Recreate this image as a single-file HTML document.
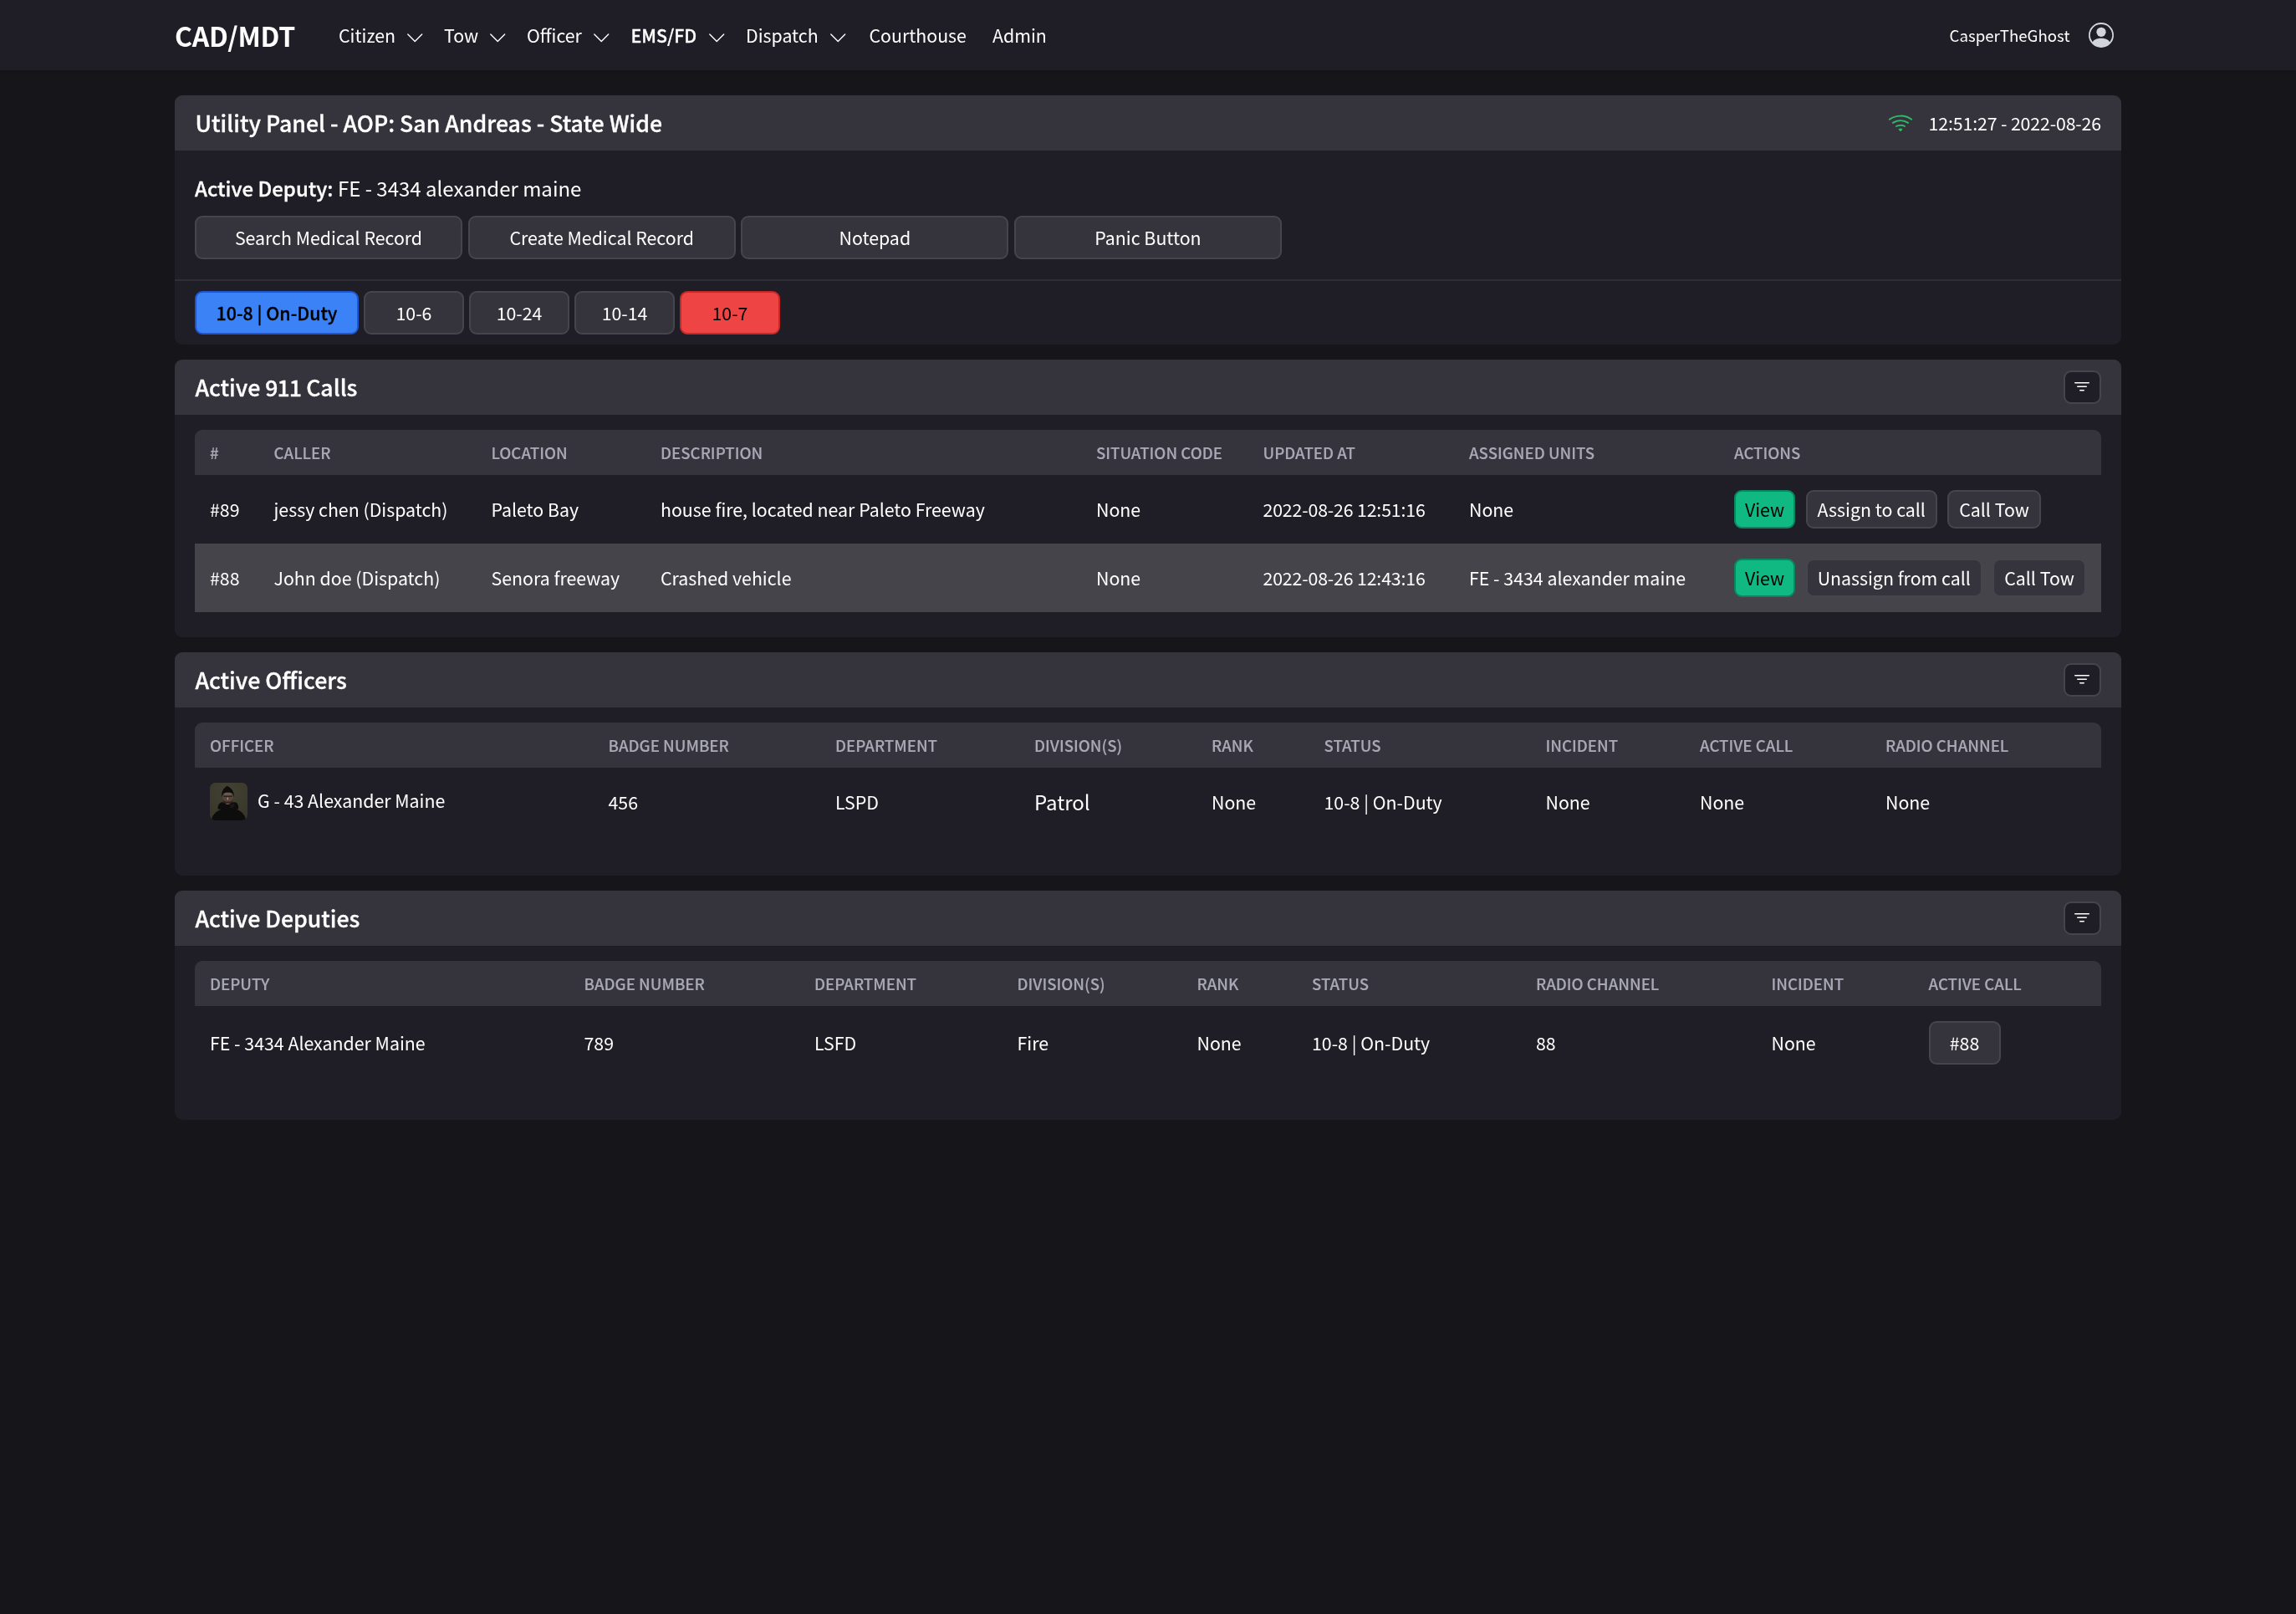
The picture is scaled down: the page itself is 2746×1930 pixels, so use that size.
<!DOCTYPE html>
<html lang="en">
<head>
<meta charset="utf-8">
<title>EMS/FD - CAD/MDT</title>
<style>
*{box-sizing:border-box;margin:0;padding:0}
html,body{width:2746px;height:1930px;background:#16151a;overflow:hidden}
body{will-change:transform;font-family:"Noto Sans CJK JP","Noto Sans CJK SC","Liberation Sans",sans-serif;color:#fff;font-size:21.33px;line-height:36px;position:relative}
ul{list-style:none}
svg{display:block}
b,h1,th,.ni.act{font-weight:500;-webkit-text-stroke:0.3px currentColor}
/* NAV */
nav{position:absolute;left:0;top:0;width:2746px;height:84px;background:#1f1e26;box-shadow:0 1px 3px rgba(0,0,0,.15)}
.brand{position:absolute;left:209px;top:18px;font-size:32px;line-height:48px;font-weight:700;white-space:nowrap;letter-spacing:-0.2px}
.ni{position:absolute;top:24px;font-size:21.33px;line-height:36px;white-space:nowrap;color:#fff}
.chev{position:absolute;top:34px;width:22.5px;height:22.5px;fill:#fff}
.user{position:absolute;left:2331.5px;top:24px;font-size:18.67px;line-height:36px;white-space:nowrap}
.uicon{position:absolute;left:2498px;top:27px;width:30px;height:30px;fill:#d1d5db}
/* CARDS */
.card{position:absolute;left:209px;width:2328px;background:#1f1e26;border-radius:9px;overflow:hidden}
.chead{position:absolute;left:0;top:0;width:2328px;height:66px;background:#35343d}
.chead h1{position:absolute;left:24.5px;top:12px;font-size:26.67px;line-height:42px;white-space:nowrap}
.btn{display:block;border:2px solid #46454d;background:#35343c;color:#fff;border-radius:9px;font-size:21.33px;line-height:36px;text-align:center;white-space:nowrap}
.fbtn{position:absolute;left:2258.5px;top:13px;width:45px;height:40px;border-radius:9px;background:#1f1e26;border:2px solid #46454e}
.fbtn svg{position:absolute;left:8.5px;top:6px;width:24px;height:24px;fill:#fff}
/* utility */
.clock{position:absolute;right:24px;letter-spacing:-0.14px;top:15px;font-size:21.33px;line-height:36px;white-space:nowrap}
.wifi{position:absolute;left:2049px;top:18px;width:30px;height:30px;fill:#34b76a}
.adep{position:absolute;left:24px;top:90px;font-size:24px;line-height:42px;white-space:nowrap}
.mbtns{position:absolute;left:24px;top:144px;display:flex;gap:6.67px}
.mbtns .btn{width:320px;height:52px;padding:6px 0}
.sline{position:absolute;left:0;top:220px;width:2328px;height:2px;background:#2f2e36}
.sbtns{position:absolute;left:24px;top:234px;display:flex;gap:6px}
.sbtns .btn{width:120px;height:52px;padding:6px 0}
.sbtns .btn.blue{width:196px}
.btn.blue{background:#3b82f6;border-color:#1f55cf;color:#000;font-weight:500;-webkit-text-stroke:0.3px #000}
.btn.red{background:#ef4444;border-color:#c62828;color:#000}
/* tables */
.tbl{position:absolute;left:24px;top:84px;width:2280px;border-collapse:collapse;table-layout:fixed}
.tbl th{height:54px;background:#35343d;color:#a9a9b5;-webkit-text-stroke:0.15px currentColor;font-size:18.67px;line-height:30px;text-align:left;padding:0 18px;text-transform:uppercase;white-space:nowrap;overflow:visible}
.tbl th:first-child{border-top-left-radius:9px}
.tbl th:last-child{border-top-right-radius:9px}
.tbl td{padding:0 18px;white-space:nowrap;font-size:21.33px;line-height:36px;vertical-align:middle;overflow:visible}
.calls td{height:82px}
.tbl td.dt{letter-spacing:-0.16px}
.calls tr.hl td{background:#45444b}
.acts{display:flex}
.acts .btn{height:46px;padding:3px 0;margin-right:12.5px;flex:none}
.acts .btn:last-child{margin-right:0}
.acts .btn.green{width:73px;margin-right:13px}
.btn.green{background:#10b981;border-color:#0b8660;color:#000}
.off td{height:81px}
.ofc{display:flex;align-items:center}
.ava{width:45px;height:45px;margin-right:12px}
.ofc span{position:relative;top:-2px}
.tbl td .big{font-size:24px;position:relative;top:1px;left:0px}
.dep td{height:88px}
.dep .btn{display:inline-block;width:86px;height:52px;padding:6px 0;vertical-align:middle}
</style>
</head>
<body>
<nav><div class="brand">CAD/MDT</div><div class="ni" style="left:405px">Citizen</div><svg class="chev" style="left:485px" viewBox="0 0 16 16"><path fill-rule="evenodd" d="M1.646 4.646a.5.5 0 0 1 .708 0L8 10.293l5.646-5.647a.5.5 0 0 1 .708.708l-6 6a.5.5 0 0 1-.708 0l-6-6a.5.5 0 0 1 0-.708z"/></svg><div class="ni" style="left:531px">Tow</div><svg class="chev" style="left:584px" viewBox="0 0 16 16"><path fill-rule="evenodd" d="M1.646 4.646a.5.5 0 0 1 .708 0L8 10.293l5.646-5.647a.5.5 0 0 1 .708.708l-6 6a.5.5 0 0 1-.708 0l-6-6a.5.5 0 0 1 0-.708z"/></svg><div class="ni" style="left:630px">Officer</div><svg class="chev" style="left:708px" viewBox="0 0 16 16"><path fill-rule="evenodd" d="M1.646 4.646a.5.5 0 0 1 .708 0L8 10.293l5.646-5.647a.5.5 0 0 1 .708.708l-6 6a.5.5 0 0 1-.708 0l-6-6a.5.5 0 0 1 0-.708z"/></svg><div class="ni act" style="left:754.5px">EMS/FD</div><svg class="chev" style="left:846px" viewBox="0 0 16 16"><path fill-rule="evenodd" d="M1.646 4.646a.5.5 0 0 1 .708 0L8 10.293l5.646-5.647a.5.5 0 0 1 .708.708l-6 6a.5.5 0 0 1-.708 0l-6-6a.5.5 0 0 1 0-.708z"/></svg><div class="ni" style="left:892px">Dispatch</div><svg class="chev" style="left:991px" viewBox="0 0 16 16"><path fill-rule="evenodd" d="M1.646 4.646a.5.5 0 0 1 .708 0L8 10.293l5.646-5.647a.5.5 0 0 1 .708.708l-6 6a.5.5 0 0 1-.708 0l-6-6a.5.5 0 0 1 0-.708z"/></svg><div class="ni" style="left:1039.5px">Courthouse</div><div class="ni" style="left:1187px">Admin</div><div class="user">CasperTheGhost</div><svg class="uicon" viewBox="0 0 16 16"><path d="M11 6a3 3 0 1 1-6 0 3 3 0 0 1 6 0z"/><path fill-rule="evenodd" d="M0 8a8 8 0 1 1 16 0A8 8 0 0 1 0 8zm8-7a7 7 0 0 0-5.468 11.37C3.242 11.226 4.805 10 8 10s4.757 1.225 5.468 2.37A7 7 0 0 0 8 1z"/></svg></nav>
<main>
<section class="card" style="top:114px;height:298px">
<div class="chead"><h1>Utility Panel - AOP: San Andreas - State Wide</h1><svg class="wifi" viewBox="0 0 16 16"><path d="M15.384 6.115a.485.485 0 0 0-.047-.736A12.444 12.444 0 0 0 8 3C5.259 3 2.723 3.882.663 5.379a.485.485 0 0 0-.048.736.518.518 0 0 0 .668.05A11.448 11.448 0 0 1 8 4c2.507 0 4.827.802 6.716 2.164.205.148.49.13.668-.049z"/><path d="M13.229 8.271a.482.482 0 0 0-.063-.745A9.455 9.455 0 0 0 8 6c-1.905 0-3.68.56-5.166 1.526a.48.48 0 0 0-.063.745.525.525 0 0 0 .652.065A8.46 8.46 0 0 1 8 7a8.46 8.46 0 0 1 4.576 1.336c.206.132.48.108.653-.065zm-2.183 2.183c.226-.226.185-.605-.1-.75A6.473 6.473 0 0 0 8 9c-1.06 0-2.062.254-2.946.704-.285.145-.326.524-.1.75l.015.015c.16.16.407.19.611.09A5.478 5.478 0 0 1 8 10c.868 0 1.69.201 2.42.56.203.1.45.07.61-.091l.016-.015zM9.06 12.44c.196-.196.198-.52-.04-.66A1.99 1.99 0 0 0 8 11.5a1.99 1.99 0 0 0-1.02.28c-.238.14-.236.464-.04.66l.706.706a.5.5 0 0 0 .707 0l.707-.707z"/></svg><div class="clock">12:51:27 - 2022-08-26</div></div>
<p class="adep"><b>Active Deputy: </b>FE - 3434 alexander maine</p>
<ul class="mbtns"><li class="btn">Search Medical Record</li><li class="btn">Create Medical Record</li><li class="btn">Notepad</li><li class="btn">Panic Button</li></ul>
<div class="sline"></div>
<ul class="sbtns"><li class="btn blue">10-8 | On-Duty</li><li class="btn">10-6</li><li class="btn">10-24</li><li class="btn">10-14</li><li class="btn red">10-7</li></ul>
</section>
<section class="card" style="top:430px;height:332px">
<div class="chead"><h1>Active <span style="letter-spacing:-0.9px">911</span> Calls</h1><div class="fbtn"><svg viewBox="0 0 16 16"><path d="M6 10.5a.5.5 0 0 1 .5-.5h3a.5.5 0 0 1 0 1h-3a.5.5 0 0 1-.5-.5zm-2-3a.5.5 0 0 1 .5-.5h7a.5.5 0 0 1 0 1h-7a.5.5 0 0 1-.5-.5zm-2-3a.5.5 0 0 1 .5-.5h11a.5.5 0 0 1 0 1h-11a.5.5 0 0 1-.5-.5z"/></svg></div></div>
<table class="tbl calls"><colgroup><col style="width:76.5px"><col style="width:260px"><col style="width:202.5px"><col style="width:521px"><col style="width:199.5px"><col style="width:246.5px"><col style="width:317px"><col style="width:457px"></colgroup>
<thead><tr><th>#</th><th>Caller</th><th>Location</th><th>Description</th><th>Situation Code</th><th>Updated At</th><th>Assigned Units</th><th>Actions</th></tr></thead>
<tbody>
<tr><td>#89</td><td>jessy chen (Dispatch)</td><td>Paleto Bay</td><td>house fire, located near Paleto Freeway</td><td>None</td><td class="dt">2022-08-26 12:51:16</td><td>None</td><td><div class="acts"><span class="btn green">View</span><span class="btn" style="width:156.5px">Assign to call</span><span class="btn" style="width:112px">Call Tow</span></div></td></tr>
<tr class="hl"><td>#88</td><td>John doe (Dispatch)</td><td>Senora freeway</td><td>Crashed vehicle</td><td>None</td><td class="dt">2022-08-26 12:43:16</td><td>FE - 3434 alexander maine</td><td><div class="acts"><span class="btn green">View</span><span class="btn" style="width:210.5px">Unassign from call</span><span class="btn" style="width:112px">Call Tow</span></div></td></tr>
</tbody></table>
</section>
<section class="card" style="top:780px;height:267px">
<div class="chead"><h1>Active Officers</h1><div class="fbtn"><svg viewBox="0 0 16 16"><path d="M6 10.5a.5.5 0 0 1 .5-.5h3a.5.5 0 0 1 0 1h-3a.5.5 0 0 1-.5-.5zm-2-3a.5.5 0 0 1 .5-.5h7a.5.5 0 0 1 0 1h-7a.5.5 0 0 1-.5-.5zm-2-3a.5.5 0 0 1 .5-.5h11a.5.5 0 0 1 0 1h-11a.5.5 0 0 1-.5-.5z"/></svg></div></div>
<table class="tbl off"><colgroup><col style="width:476.5px"><col style="width:271.5px"><col style="width:238px"><col style="width:212px"><col style="width:134.5px"><col style="width:265px"><col style="width:184.5px"><col style="width:222px"><col style="width:276px"></colgroup>
<thead><tr><th>Officer</th><th>Badge Number</th><th>Department</th><th>Division(s)</th><th>Rank</th><th>Status</th><th>Incident</th><th>Active Call</th><th>Radio Channel</th></tr></thead>
<tbody>
<tr><td><div class="ofc"><svg class="ava" viewBox="0 0 45 45"><defs><clipPath id="avc"><rect width="45" height="45" rx="6.5"/></clipPath><radialGradient id="avbg" cx="50%" cy="20%" r="80%"><stop offset="0" stop-color="#424132"/><stop offset="1" stop-color="#38372a"/></radialGradient><filter id="avb" x="-10%" y="-10%" width="120%" height="120%"><feGaussianBlur stdDeviation="0.55"/></filter></defs><g clip-path="url(#avc)"><rect width="45" height="45" fill="url(#avbg)"/><g filter="url(#avb)"><path d="M1.5 46 C2.5 38.5 7.5 34 13.5 32 L9.8 31.5 C9 27.5 11 23.8 15 23.2 L30 23.2 C33.2 23.8 34.8 27.5 34 31.5 L32 32 C38 34 42.5 38.5 43.5 46 Z" fill="#0f0d0d"/><path d="M24 27 L28.5 24.5 L30 28 L25 31 Z" fill="#2a1c1e" opacity=".6"/><ellipse cx="21.5" cy="18" rx="6.5" ry="7.9" fill="#54453c"/><ellipse cx="21.5" cy="13.6" rx="4.6" ry="1.9" fill="#695a4f"/><path d="M14.4 17.5 C13.2 10.5 17 5.8 20.8 3.8 C25 5.8 29.6 10.5 28.8 17.5 C28.2 13.2 26.5 11.6 21.6 11.6 C16.6 11.6 15.2 13.2 14.4 17.5 Z" fill="#0e0b0a"/><rect x="16.3" y="15.4" width="10.4" height="1.7" rx=".8" fill="#241a16" opacity=".85"/><ellipse cx="21.3" cy="19" rx=".8" ry="1.7" fill="#a88a76"/><path d="M15.3 19.5 C15.8 28 27.2 28 27.8 19.5 C26.2 22.8 24 22.4 21.5 22.4 C19 22.4 17 22.8 15.3 19.5 Z" fill="#35241f"/><ellipse cx="21.4" cy="25.3" rx="2.2" ry=".8" fill="#6b574b"/></g></g></svg><span>G - 43 Alexander Maine</span></div></td><td>456</td><td>LSPD</td><td><span class="big">Patrol</span></td><td>None</td><td>10-8 | On-Duty</td><td>None</td><td>None</td><td>None</td></tr>
</tbody></table>
</section>
<section class="card" style="top:1065px;height:274px">
<div class="chead"><h1>Active Deputies</h1><div class="fbtn"><svg viewBox="0 0 16 16"><path d="M6 10.5a.5.5 0 0 1 .5-.5h3a.5.5 0 0 1 0 1h-3a.5.5 0 0 1-.5-.5zm-2-3a.5.5 0 0 1 .5-.5h7a.5.5 0 0 1 0 1h-7a.5.5 0 0 1-.5-.5zm-2-3a.5.5 0 0 1 .5-.5h11a.5.5 0 0 1 0 1h-11a.5.5 0 0 1-.5-.5z"/></svg></div></div>
<table class="tbl dep"><colgroup><col style="width:447.5px"><col style="width:275.5px"><col style="width:242.5px"><col style="width:215px"><col style="width:137.5px"><col style="width:268px"><col style="width:281.5px"><col style="width:188px"><col style="width:224.5px"></colgroup>
<thead><tr><th>Deputy</th><th>Badge Number</th><th>Department</th><th>Division(s)</th><th>Rank</th><th>Status</th><th>Radio Channel</th><th>Incident</th><th>Active Call</th></tr></thead>
<tbody>
<tr><td>FE - 3434 Alexander Maine</td><td>789</td><td>LSFD</td><td>Fire</td><td>None</td><td>10-8 | On-Duty</td><td>88</td><td>None</td><td><span class="btn">#88</span></td></tr>
</tbody></table>
</section>
</main>
</body>
</html>
